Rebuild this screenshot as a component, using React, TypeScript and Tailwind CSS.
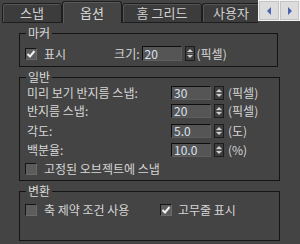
import React from "react";

const font = { fontFamily: '"Noto Sans CJK KR", "Noto Sans", sans-serif' };

function Check({ checked }: { checked?: boolean }) {
  return (
    <div className="w-[12px] h-[12px] shrink-0 border-t border-l border-t-[#151515] border-l-[#151515] border-b border-r border-b-[#6a6a6a] border-r-[#6a6a6a] bg-[#5c5c5c] flex items-center justify-center">
      {checked && (
        <svg width="10" height="10" viewBox="0 0 10 10">
          <path d="M1.5 5 L4 7.5 L8.5 2" stroke="#f0f0f0" strokeWidth="2" fill="none" />
        </svg>
      )}
    </div>
  );
}

function Spinner({ h = 14 }: { h?: number }) {
  return (
    <div className="w-[10px] shrink-0 bg-[#3e3e3e] border border-[#1c1c1c] flex flex-col" style={{ height: h }}>
      <svg width="8" height={h - 2} viewBox={`0 0 8 ${h - 2}`}>
        <path d={`M4 2 L7 5 L1 5 Z`} fill="#d0d0d0" />
        <line x1="1" x2="7" y1={(h - 2) / 2} y2={(h - 2) / 2} stroke="#6a6a6a" strokeWidth="1" />
        <path d={`M1 ${h - 7} L7 ${h - 7} L4 ${h - 4} Z`} fill="#d0d0d0" />
      </svg>
    </div>
  );
}

function Field({ value, h = 14 }: { value: string; h?: number }) {
  return (
    <div
      className="w-[40px] shrink-0 bg-[#555555] border-t border-l border-t-[#0e0e0e] border-l-[#0e0e0e] border-b border-r border-b-[#5e5e5e] border-r-[#5e5e5e] pl-[2px] text-[12px] leading-[12px] text-[#d8e2f2] flex items-center"
      style={{ height: h }}
    >
      {value}
    </div>
  );
}

function Tab({ label, active, w }: { label: string; active?: boolean; w: string }) {
  return (
    <div
      className={
        active
          ? `${w} h-[22px] bg-[#444444] border border-b-0 border-[#1e1e1e] rounded-t-[3px] flex items-center justify-center text-[13px] text-[#dadada] shadow-[inset_1px_1px_0_#5a5a5a]`
          : `${w} h-[20px] bg-[#3c3c3c] border border-[#1e1e1e] rounded-t-[3px] flex items-center justify-center text-[13px] text-[#d0d0d0] shadow-[inset_1px_1px_0_#555555]`
      }
    >
      {label}
    </div>
  );
}

export default function App() {
  return (
    <div className="w-[300px] h-[244px] bg-[#444444] overflow-hidden text-[#d6d6d6]" style={font}>
      {/* tabs */}
      <div className="h-[23px] flex items-end pl-[2px]">
        <Tab label="스냅" w="w-[60px]" />
        <Tab label="옵션" w="w-[60px]" active />
        <Tab label="홈 그리드" w="w-[80px]" />
        <div className="w-[56px] h-[20px] bg-[#3c3c3c] border border-r-0 border-[#1e1e1e] rounded-tl-[3px] flex items-center pl-[10px] text-[13px] text-[#d0d0d0] overflow-hidden whitespace-nowrap shadow-[inset_1px_1px_0_#555555] self-end">
          사용자
        </div>
        <div className="self-start flex h-[21px] bg-[#f4f4f4] p-[1px] gap-[1px]">
          <div className="w-[20px] bg-[#dcdcdc] border border-[#c4c4c4] flex items-center justify-center">
            <svg width="6" height="8" viewBox="0 0 6 8"><path d="M5 0 L1 4 L5 8 Z" fill="#4a62b0" /></svg>
          </div>
          <div className="w-[19px] bg-[#dcdcdc] border border-[#c4c4c4] flex items-center justify-center">
            <svg width="6" height="8" viewBox="0 0 6 8"><path d="M1 0 L5 4 L1 8 Z" fill="#4a62b0" /></svg>
          </div>
        </div>
      </div>

      {/* 마커 */}
      <fieldset className="ml-[19px] mt-[3px] w-[259px] h-[41px] border border-[#141414] p-0 m-0">
        <legend className="ml-[6px] px-[2px] text-[12px] leading-[14px] text-[#dadada]">마커</legend>
        <div className="mt-[6px] h-[15px] flex items-center pl-[5px] text-[12px] leading-[14px]">
          <Check checked />
          <span className="ml-[7px]">표시</span>
          <span className="ml-[48px]">크기:</span>
          <div className="ml-[2px] flex items-center">
            <Field value="20" h={15} />
            <div className="ml-[3px]"><Spinner h={15} /></div>
            <span className="ml-[2px]">(픽셀)</span>
          </div>
        </div>
      </fieldset>

      {/* 일반 */}
      <fieldset className="ml-[19px] mt-[3px] w-[261px] h-[111px] border border-[#141414] p-0">
        <legend className="ml-[6px] px-[2px] text-[12px] leading-[14px] text-[#dadada]">일반</legend>
        <div className="pl-[7px] text-[12px] leading-[14px]">
          <div className="mt-[2px] h-[14px] flex items-center">
            <span className="w-[144px]">미리 보기 반지름 스냅:</span>
            <Field value="30" />
            <div className="ml-[3px]"><Spinner /></div>
            <span className="ml-[4px]">(픽셀)</span>
          </div>
          <div className="mt-[4px] h-[14px] flex items-center">
            <span className="w-[144px]">반지름 스냅:</span>
            <Field value="20" />
            <div className="ml-[3px]"><Spinner /></div>
            <span className="ml-[4px]">(픽셀)</span>
          </div>
          <div className="mt-[6px] h-[14px] flex items-center">
            <span className="w-[144px]">각도:</span>
            <Field value="5.0" />
            <div className="ml-[3px]"><Spinner /></div>
            <span className="ml-[4px]">(도)</span>
          </div>
          <div className="mt-[5px] h-[14px] flex items-center">
            <span className="w-[144px]">백분율:</span>
            <Field value="10.0" />
            <div className="ml-[3px]"><Spinner /></div>
            <span className="ml-[4px]">(%)</span>
          </div>
          <div className="mt-[5px] h-[14px] flex items-center -ml-[2px]">
            <Check />
            <span className="ml-[7px]">고정된 오브젝트에 스냅</span>
          </div>
        </div>
      </fieldset>

      {/* 변환 */}
      <fieldset className="ml-[19px] mt-[3px] w-[261px] h-[57px] border border-[#141414] p-0">
        <legend className="ml-[6px] px-[2px] text-[12px] leading-[14px] text-[#dadada]">변환</legend>
        <div className="mt-[5px] h-[14px] flex items-center pl-[5px] text-[12px] leading-[14px]">
          <Check />
          <span className="ml-[7px] w-[116px]">축 제약 조건 사용</span>
          <Check checked />
          <span className="ml-[6px]">고무줄 표시</span>
        </div>
      </fieldset>
    </div>
  );
}
